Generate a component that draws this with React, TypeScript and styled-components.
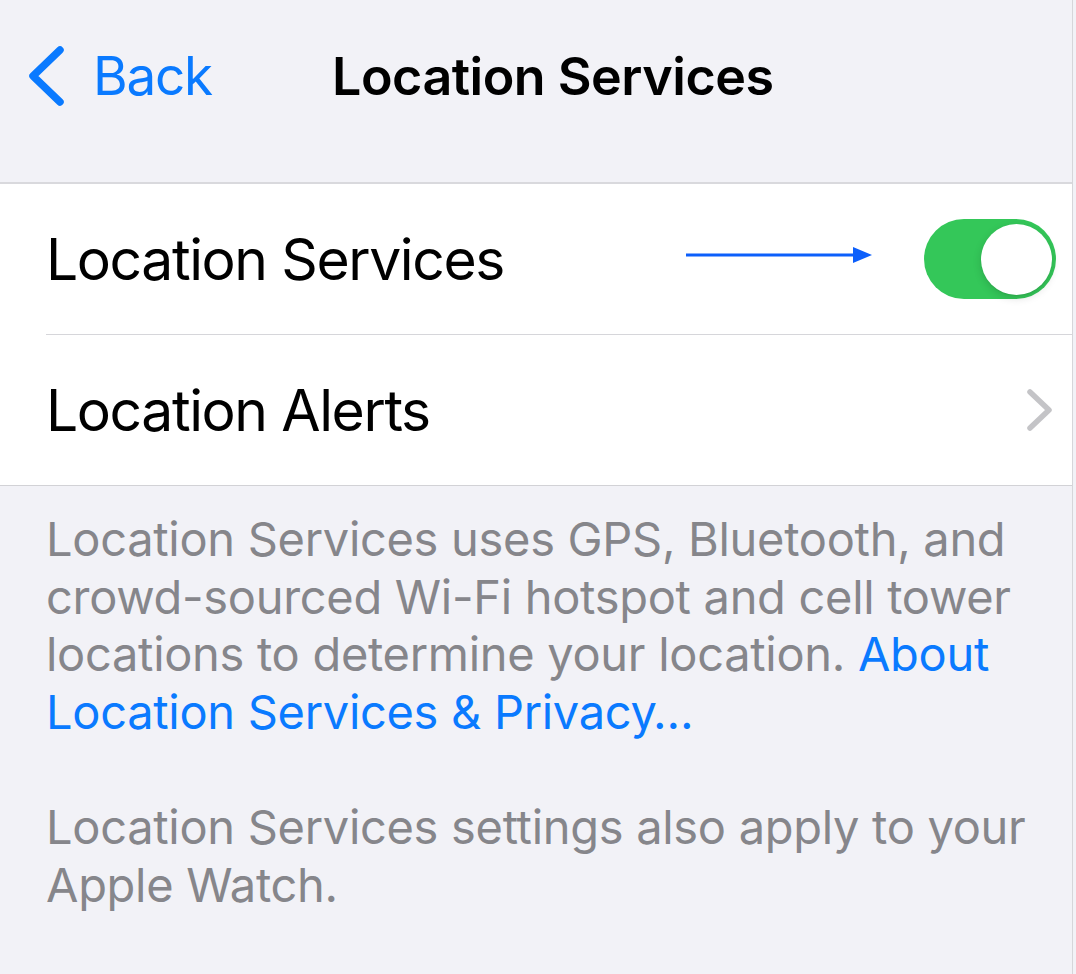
import React from "react";
import styled, { createGlobalStyle } from "styled-components";

const GlobalStyle = createGlobalStyle`
  html, body {
    margin: 0;
    padding: 0;
    background: #f2f2f7;
    font-family: Inter, "Noto Sans", "Liberation Sans", sans-serif;
    -webkit-font-smoothing: antialiased;
  }
`;

const Page = styled.div`
  width: 1072px;
  min-height: 974px;
  background: #f2f2f7;
  border-right: 1px solid #d6d6da;
`;

const NavBar = styled.nav`
  height: 152px;
  display: flex;
  align-items: center;
  padding-left: 26px;
`;

const BackButton = styled.a`
  display: flex;
  align-items: center;
  gap: 27px;
  color: #0a7aff;
  font-size: 53px;
  letter-spacing: -1.2px;
  text-decoration: none;
`;

const NavTitle = styled.h1`
  margin: 0 0 0 120px;
  font-size: 52px;
  font-weight: 600;
  letter-spacing: -0.5px;
  color: #000;
`;

const Group = styled.section`
  margin-top: 30px;
  background: #fff;
  border-top: 2px solid #d9d9dd;
  border-bottom: 1px solid #d2d2d6;
`;

const Row = styled.div`
  padding-left: 46px;
`;

const RowInner = styled.div<{ $divider?: boolean }>`
  height: 150px;
  display: flex;
  align-items: center;
  padding-right: ${(p) => (p.$divider ? "16px" : "18px")};
  border-bottom: ${(p) => (p.$divider ? "1px solid #d6d6da" : "none")};
`;

const RowLabel = styled.span`
  font-size: 57px;
  letter-spacing: -1.4px;
  color: #000;
  flex: 1;
`;

const Pointer = styled.svg`
  margin-right: 50px;
  margin-top: -8px;
`;

const Toggle = styled.span<{ $on: boolean }>`
  width: 132px;
  height: 80px;
  border-radius: 40px;
  background: ${(p) => (p.$on ? "#34c759" : "#e9e9eb")};
  display: flex;
  align-items: center;
  justify-content: ${(p) => (p.$on ? "flex-end" : "flex-start")};
  padding: 0 4px;
  box-sizing: border-box;
`;

const Knob = styled.span`
  width: 71px;
  height: 71px;
  border-radius: 50%;
  background: #fff;
  box-shadow: 0 3px 8px rgba(0, 0, 0, 0.15), 0 1px 1px rgba(0, 0, 0, 0.06);
`;

const Footer = styled.p`
  margin: 0;
  padding: 24px 0 0 46px;
  font-size: 47px;
  line-height: 57.5px;
  letter-spacing: -0.3px;
  color: #86868b;
  white-space: nowrap;
  & + & {
    padding-top: 58px;
  }
`;

const Link = styled.a`
  color: #0a7aff;
  text-decoration: none;
`;

function ChevronLeft() {
  return (
    <svg width="40" height="62" viewBox="0 0 40 62">
      <path
        d="M34 5 L7 31 L34 57"
        fill="none"
        stroke="#0a7aff"
        strokeWidth="7.5"
        strokeLinecap="round"
        strokeLinejoin="round"
      />
    </svg>
  );
}

function ChevronRight() {
  return (
    <svg width="28" height="44" viewBox="0 0 28 44">
      <path
        d="M4 4 L23 22 L4 40"
        fill="none"
        stroke="#c4c4c7"
        strokeWidth="5.5"
        strokeLinecap="round"
        strokeLinejoin="round"
      />
    </svg>
  );
}

function ArrowPointer() {
  return (
    <Pointer width="188" height="20" viewBox="0 0 188 20">
      <line x1="0" y1="10" x2="170" y2="10" stroke="#0c5ffb" strokeWidth="3.2" />
      <polygon points="167,2 186,10 167,18" fill="#0c5ffb" />
    </Pointer>
  );
}

export default function App() {
  return (
    <Page>
      <GlobalStyle />
      <NavBar>
        <BackButton>
          <ChevronLeft />
          Back
        </BackButton>
        <NavTitle>Location Services</NavTitle>
      </NavBar>

      <Group>
        <Row>
          <RowInner $divider>
            <RowLabel>Location Services</RowLabel>
            <ArrowPointer />
            <Toggle $on>
              <Knob />
            </Toggle>
          </RowInner>
        </Row>
        <Row>
          <RowInner>
            <RowLabel>Location Alerts</RowLabel>
            <ChevronRight />
          </RowInner>
        </Row>
      </Group>

      <Footer>
        Location Services uses GPS, Bluetooth, and
        <br />
        crowd-sourced Wi-Fi hotspot and cell tower
        <br />
        locations to determine your location. <Link>About</Link>
        <br />
        <Link>Location Services &amp; Privacy…</Link>
      </Footer>
      <Footer>
        Location Services settings also apply to your
        <br />
        Apple Watch.
      </Footer>
    </Page>
  );
}
